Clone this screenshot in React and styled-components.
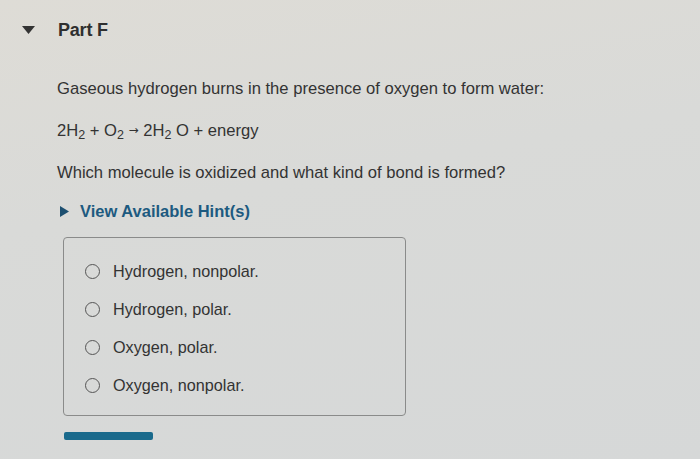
import React from 'react';
import styled, { createGlobalStyle } from 'styled-components';

const GlobalStyle = createGlobalStyle`
  html, body {
    margin: 0;
    padding: 0;
    background: #d8d9d7;
  }
  body {
    font-family: "Liberation Sans", Arial, sans-serif;
    color: #333;
  }
`;

const options = [
  'Hydrogen, nonpolar.',
  'Hydrogen, polar.',
  'Oxygen, polar.',
  'Oxygen, nonpolar.',
];

const App = () => (
  <>
    <GlobalStyle />
    <Page>
      <PartHeader>
        <svg width="13" height="8" viewBox="0 0 13 8">
          <path d="M0 0h13L6.5 8z" fill="#333" />
        </svg>
        <PartTitle>Part F</PartTitle>
      </PartHeader>

      <Body>
        <Paragraph>Gaseous hydrogen burns in the presence of oxygen to form water:</Paragraph>
        <Paragraph>
          2H<sub>2</sub> + O<sub>2</sub> <Arrow>→</Arrow> 2H<sub>2</sub> O + energy
        </Paragraph>
        <Paragraph>Which molecule is oxidized and what kind of bond is formed?</Paragraph>

        <HintToggle>
          <svg width="9" height="11" viewBox="0 0 9 11">
            <path d="M0 0l9 5.5L0 11z" fill="#1d4f70" />
          </svg>
          View Available Hint(s)
        </HintToggle>

        <ChoiceBox>
          {options.map((opt) => (
            <Choice key={opt}>
              <Radio />
              <span>{opt}</span>
            </Choice>
          ))}
        </ChoiceBox>

        <SubmitBar />
      </Body>
    </Page>
  </>
);

const Page = styled.div`
  width: 700px;
  height: 459px;
  box-sizing: border-box;
  padding: 20px 0 0 22px;
  background: linear-gradient(170deg, #dedcd6 0%, #d9dad8 40%, #d6d8d8 100%);
  overflow: hidden;
`;

const PartHeader = styled.div`
  display: flex;
  align-items: center;
  gap: 23px;
  height: 20px;
`;

const PartTitle = styled.span`
  font-size: 18px;
  font-weight: bold;
  color: #2f2f2f;
  letter-spacing: -0.2px;
`;

const Body = styled.div`
  padding: 38px 0 0 35px;
  display: flex;
  flex-direction: column;
  align-items: flex-start;
`;

const Paragraph = styled.p`
  margin: 0 0 21px;
  font-size: 16.6px;
  line-height: 21px;
  color: #333;

  sub {
    font-size: 12.5px;
    line-height: 0;
    vertical-align: -3px;
  }
`;

const Arrow = styled.span`
  font-family: "DejaVu Sans", sans-serif;
  font-size: 12px;
  vertical-align: 2px;
`;

const HintToggle = styled.div`
  display: flex;
  align-items: center;
  gap: 11px;
  margin: -2px 0 0 3px;
  font-size: 16.5px;
  font-weight: bold;
  color: #1d5a80;
`;

const ChoiceBox = styled.div`
  margin: 16px 0 0 6px;
  width: 343px;
  height: 179px;
  box-sizing: border-box;
  border: 1px solid #8a8b8a;
  border-radius: 4px;
  padding: 23px 0 0 21px;
  display: flex;
  flex-direction: column;
  gap: 18px;
`;

const Choice = styled.label`
  display: flex;
  align-items: center;
  gap: 13px;
  font-size: 16.2px;
  line-height: 20px;
  color: #333;
`;

const Radio = styled.span`
  width: 13px;
  height: 13px;
  border: 1.6px solid #555;
  border-radius: 50%;
`;

const SubmitBar = styled.div`
  margin: 16px 0 0 7px;
  width: 89px;
  height: 8px;
  border-radius: 2px;
  background: #1a6a8c;
`;

export default App;
